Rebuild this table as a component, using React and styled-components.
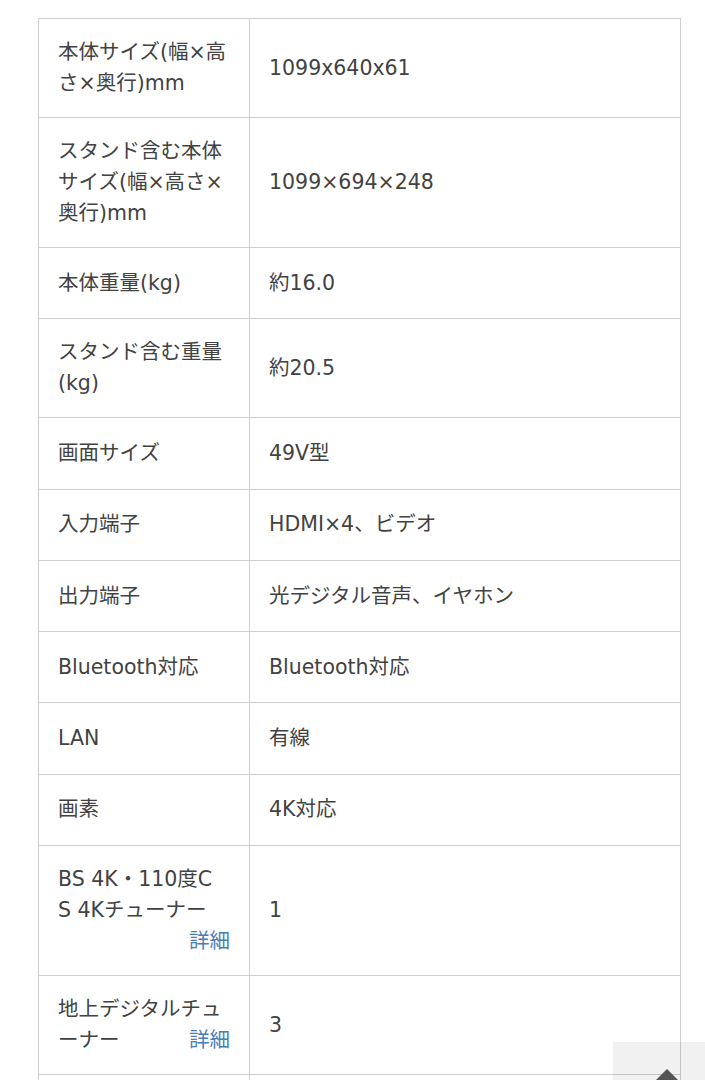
import React from "react";
import styled, { createGlobalStyle } from "styled-components";

const GlobalStyle = createGlobalStyle`
  html, body {
    margin: 0;
    padding: 0;
    background: #ffffff;
  }
  body {
    font-family: "DejaVu Sans", "Noto Sans CJK JP", sans-serif;
    color: #404040;
    -webkit-font-smoothing: antialiased;
  }
`;

const Page = styled.main`
  padding: 18px 24px 0 38px;
`;

const SpecTable = styled.table`
  width: 643px;
  border-collapse: collapse;
  table-layout: fixed;
  border: 1px solid #cfcfcf;
  font-size: 20.5px;
  font-weight: 400;
  line-height: 31px;
  color: #424242;
`;

const Row = styled.tr`
  height: 71.3px;
`;

const Label = styled.th`
  width: 172px;
  padding: 18px 19px;
  border: 1px solid #cfcfcf;
  text-align: left;
  font-weight: 400;
  vertical-align: middle;
`;

const Value = styled.td`
  padding: 18px 19px;
  border: 1px solid #cfcfcf;
  vertical-align: middle;
`;

const Detail = styled.a`
  float: right;
  color: #4a7cb8;
  text-decoration: none;
  cursor: pointer;
`;

const TopButton = styled.button`
  position: fixed;
  right: -16px;
  bottom: -60px;
  width: 108px;
  height: 98px;
  border: none;
  padding: 27px 0 0;
  background: rgba(0, 0, 0, 0.055);
  display: flex;
  justify-content: center;
  align-items: flex-start;
  cursor: pointer;
`;

const rows = [
  { label: ["本体サイズ(幅×高", "さ×奥行)mm"], value: "1099x640x61" },
  { label: ["スタンド含む本体", "サイズ(幅×高さ×", "奥行)mm"], value: "1099×694×248" },
  { label: ["本体重量(kg)"], value: "約16.0" },
  { label: ["スタンド含む重量", "(kg)"], value: "約20.5" },
  { label: ["画面サイズ"], value: "49V型" },
  { label: ["入力端子"], value: "HDMI×4、ビデオ" },
  { label: ["出力端子"], value: "光デジタル音声、イヤホン" },
  { label: ["Bluetooth対応"], value: "Bluetooth対応" },
  { label: ["LAN"], value: "有線" },
  { label: ["画素"], value: "4K対応" },
  { label: ["BS 4K・110度C", "S 4Kチューナー"], value: "1", detail: true },
  { label: ["地上デジタルチュ", "ーナー"], value: "3", detail: true },
  { label: ["BS・110度CSデジ", "タルチューナー"], value: "3", detail: true },
];

function LabelText({ lines }) {
  return lines.map((line, i) => (
    <React.Fragment key={i}>
      {i > 0 && <br />}
      {line}
    </React.Fragment>
  ));
}

export default function App() {
  return (
    <>
      <GlobalStyle />
      <Page>
        <SpecTable>
          <tbody>
            {rows.map((r, i) => (
              <Row key={i}>
                <Label scope="row">
                  <LabelText lines={r.label} />
                  {r.detail && <Detail>詳細</Detail>}
                </Label>
                <Value>{r.value}</Value>
              </Row>
            ))}
          </tbody>
        </SpecTable>
      </Page>
      <TopButton aria-label="ページトップへ">
        <svg width="40" height="20" viewBox="0 0 40 20">
          <path d="M20 0 L40 20 L0 20 Z" fill="#555555" />
        </svg>
      </TopButton>
    </>
  );
}
